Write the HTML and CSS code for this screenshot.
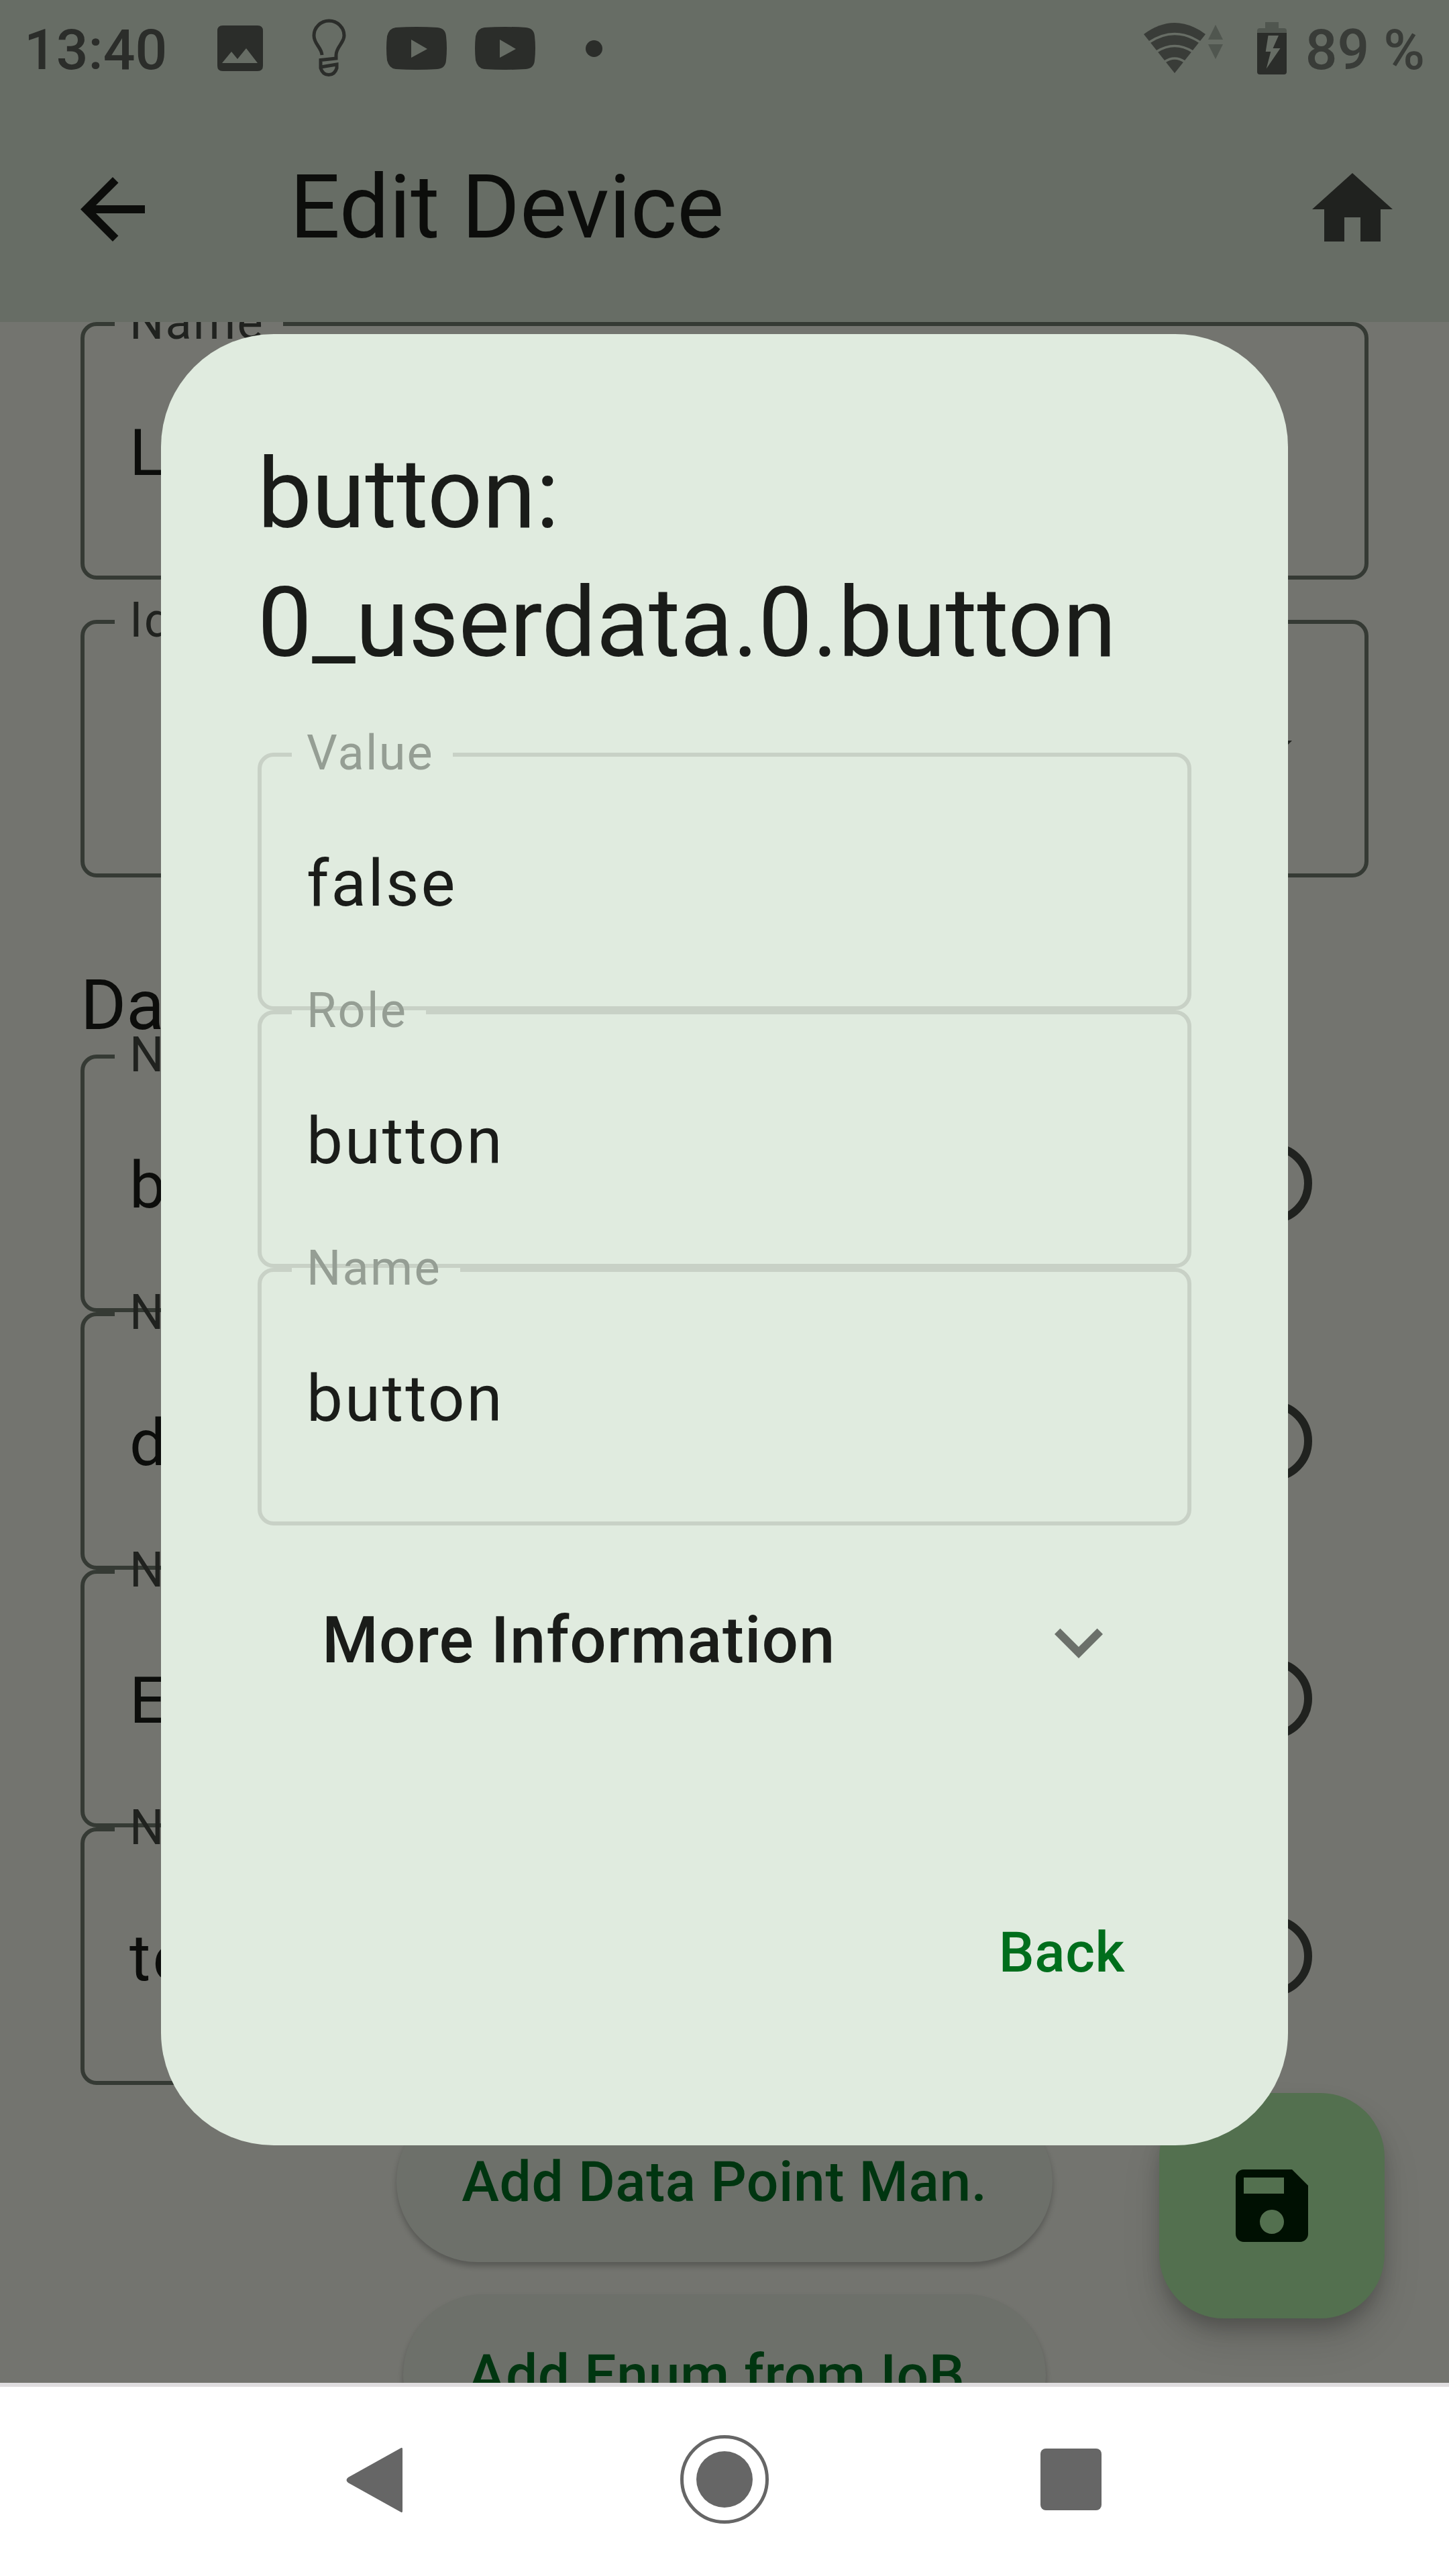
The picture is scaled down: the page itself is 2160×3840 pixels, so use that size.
FILE: index.html
```html
<!DOCTYPE html>
<html lang="en">
<head>
<meta charset="utf-8">
<title>Edit Device</title>
<link rel="stylesheet" href="styles.css">
</head>
<body>
<div class="phone">
  <header class="top">
    <div class="status">
      <span class="clock">13:40</span>
      <svg class="s-image" viewBox="0 0 68 68"><path fill-rule="evenodd" d="M8 0h52q8 0 8 8v52q0 8-8 8H8q-8 0-8-8V8q0-8 8-8zM7 56h53L43 34 30 50 21 39z"/></svg>
      <svg class="s-bulb" viewBox="0 0 52 88"><g fill="none" stroke="currentColor" stroke-width="5"><path d="M15 54C14 42 3 38 3 25a22.500 22 0 0 1 45 0C48 36 36 42 36 54v5l-23 2.500v12q3 10 12 10t12-10V68l-24 4"/></g></svg>
      <svg class="s-tube" viewBox="0 0 90 64"><path fill-rule="evenodd" d="M14 1Q45-1 76 1 88 2 89 14 91 32 89 50 88 62 76 63 45 65 14 63 4 62 1 50-1 32 1 14 4 2 14 1zM37 19v27l24-13z"/></svg>
      <svg class="s-tube" viewBox="0 0 90 64"><path fill-rule="evenodd" d="M14 1Q45-1 76 1 88 2 89 14 91 32 89 50 88 62 76 63 45 65 14 63 4 62 1 50-1 32 1 14 4 2 14 1zM37 19v27l24-13z"/></svg>
      <span class="s-dot"></span>
      <span class="grow"></span>
      <svg class="s-wifi" viewBox="0 0 118 76"><path d="M0 17Q46-17 92 17L46 75z"/><g fill="none" stroke="#676d65" stroke-width="3.5"><path d="M8 29Q46 4 84 29M19 43Q46 26 73 43M31 58Q46 48 61 58"/></g><g fill="#50564f"><path d="M96 25h22L107 3zM96 32h22l-11 22z"/></g></svg>
      <svg class="s-batt" viewBox="0 0 44 78"><path fill="#50564f" d="M12 0h20v9h8q4 0 4 4v4H0v-4q0-4 4-4h8z"/><path fill-rule="evenodd" d="M0 16h44v58q0 4-4 4H4q-4 0-4-4zM16.500 20h15.500l-8.500 19h11L13.700 69.500 20.300 44h-7.600z"/></svg>
      <span class="percent">89 %</span>
    </div>
    <div class="appbar">
      <svg class="icon back" viewBox="0 0 24 24"><path d="M20 11H7.83l5.59-5.59L12 4l-8 8 8 8 1.41-1.41L7.83 13H20v-2z"/></svg>
      <h1>Edit Device</h1>
      <svg class="icon home" viewBox="0 0 24 24"><path d="M10 20v-6h4v6h5v-8h3L12 3 2 12h3v8z"/></svg>
    </div>
  </header>

  <main class="page">
    <fieldset class="field"><legend>Name</legend><span>L</span></fieldset>
    <fieldset class="field second"><legend>Id</legend><svg class="icon drop" viewBox="0 0 24 24"><path d="M7 10l5 5 5-5z"/></svg></fieldset>
    <h2>Data Points</h2>
    <div class="row"><fieldset class="field"><legend>Name</legend><span>b</span></fieldset><i class="radio"></i></div>
    <div class="row"><fieldset class="field"><legend>Name</legend><span>d</span></fieldset><i class="radio"></i></div>
    <div class="row"><fieldset class="field"><legend>Name</legend><span>E</span></fieldset><i class="radio"></i></div>
    <div class="row"><fieldset class="field"><legend>Name</legend><span>te</span></fieldset><i class="radio"></i></div>
    <div class="buttons">
      <button class="pill">Add Data Point Man.</button>
      <button class="pill">Add Enum from IoB.</button>
    </div>
  </main>

  <nav class="nav">
    <svg viewBox="0 0 2160 282">
      <path d="M598 91q2-1 2 2v92q0 3-2 2l-79-44q-5-4 0-8z"/>
      <circle cx="1080" cy="138" r="63.5" fill="none" stroke="#666" stroke-width="5"/>
      <circle cx="1080" cy="138" r="42"/>
      <rect x="1551" y="92" width="91" height="92" rx="8"/>
    </svg>
  </nav>

  <button class="fab"><svg class="icon" viewBox="0 0 24 24"><path d="M17 3H5c-1.11 0-2 .9-2 2v14c0 1.100.89 2 2 2h14c1.100 0 2-.9 2-2V7l-4-4zm-5 16c-1.660 0-3-1.340-3-3s1.340-3 3-3 3 1.340 3 3-1.340 3-3 3zm3-10H5V5h10v4z"/></svg></button>

  <section class="dialog">
    <h2 class="dialog-title">button:<br>0_userdata.0.button</h2>
    <fieldset class="field"><legend>Value</legend><span>false</span></fieldset>
    <fieldset class="field"><legend>Role</legend><span>button</span></fieldset>
    <fieldset class="field"><legend>Name</legend><span>button</span></fieldset>
    <div class="tile"><span>More Information</span><svg class="icon" viewBox="0 0 24 24"><path d="M16.590 8.590L12 13.170 7.410 8.590 6 10l6 6 6-6z"/></svg></div>
    <div class="actions"><button class="text-button">Back</button></div>
  </section>
</div>
</body>
</html>
```
FILE: styles.css
```css
* { box-sizing: border-box; margin: 0; padding: 0; }
body { font-family: Roboto, sans-serif; background: #73746f; }
svg { display: block; fill: currentColor; flex: none; }
button { border: 0; background: none; font: 500 84px/120px Roboto, sans-serif; letter-spacing: 0.6px; white-space: nowrap; }
.phone { position: relative; width: 2160px; height: 3840px; overflow: hidden; display: flex; flex-direction: column; background: #73746f; }
.icon { width: 144px; height: 144px; }
.grow { flex: 1; }

.top { height: 480px; flex: none; background: #676d65; }
.status { height: 144px; display: flex; align-items: center; padding: 0 36px; color: #2b2d2a; }
.clock, .percent { font-size: 84px; line-height: 144px; font-weight: 500; white-space: nowrap; padding-top: 6px; }
.clock { width: 288px; }
.percent { color: #393c38; }
.s-image { width: 68px; height: 68px; margin-right: 73px; }
.s-bulb { width: 52px; height: 88px; margin-right: 59px; }
.s-tube { width: 90px; height: 64px; margin-right: 42px; }
.s-dot { width: 25px; height: 25px; border-radius: 50%; background: currentColor; margin-left: 33px; }
.s-wifi { width: 118px; height: 76px; color: #393c38; margin-right: 51px; }
.s-batt { width: 44px; height: 78px; margin-right: 28px; }
.appbar { height: 336px; display: flex; align-items: center; padding: 0 72px 0 96px; color: #0c0d0b; }
.appbar h1 { flex: 1; margin-left: 192px; padding-bottom: 7px; font-size: 132px; font-weight: 400; line-height: 168px; }
.home { color: #20221f; }

.page { height: 3072px; flex: none; overflow: hidden; padding: 0 120px; color: #0c0d0b; }
.field { display: flex; align-items: center; height: 384px; border: 6px solid #353a34; border-radius: 24px; min-width: 0; }
.field span { font-size: 96px; line-height: 144px; letter-spacing: 3px; padding: 5px 0 0 67px; }
/* The legend is as tall as the border, so the outline opens without moving down. */
.field legend { height: 6px; margin-left: 45px; padding: 0 28px 4px 22px; line-height: 2px; color: #20221f; font-size: 72px; letter-spacing: 2.25px; }
.second { margin-top: 60px; }
.drop { margin: 0 66px 0 auto; color: #20221f; }
.page h2 { height: 264px; padding-top: 118px; font-size: 104px; line-height: 146px; font-weight: 400; }
.row { display: flex; align-items: center; }
.row .field { width: 1620px; }
.radio { width: 120px; height: 120px; border: 12px solid #20221f; border-radius: 50%; margin-left: 96px; }
.buttons { display: flex; flex-direction: column; align-items: center; gap: 48px; padding-top: 24px; }
.pill { height: 240px; padding: 1px 97px 0; border-radius: 120px; background: #6d706a; color: #003510; box-shadow: 0 6px 9px rgba(0, 0, 0, .24); }

.nav { flex: none; height: 288px; background: #fff; border-top: 6px solid #dfdddf; color: #666; }
.fab { position: absolute; left: 1728px; top: 3120px; width: 336px; height: 336px; padding: 96px; border-radius: 96px; background: #53704f; color: #001002; box-shadow: 0 18px 30px -6px rgba(0, 0, 0, .25), 0 36px 60px rgba(0, 0, 0, .1); }

.dialog { position: absolute; left: 240px; top: 498px; width: 1680px; height: 2700px; padding: 143px 144px 144px; border-radius: 168px; background: #e0ebdf; color: #1a1c19; }
.dialog-title { font-size: 144px; line-height: 192px; font-weight: 400; margin-bottom: 97px; }
.dialog .field { border-color: #c8d1c6; }
.dialog .field legend { color: #959e94; }
.tile { display: flex; align-items: center; justify-content: space-between; height: 336px; margin-top: 6px; padding: 0 96px; font-size: 96px; font-weight: 500; letter-spacing: 1px; }
.tile span { padding-bottom: 6px; }
.tile svg { color: #6b706a; }
.actions { display: flex; justify-content: flex-end; margin-top: 235px; }
.text-button { height: 120px; padding: 0 99px; color: #006e1c; }
```
